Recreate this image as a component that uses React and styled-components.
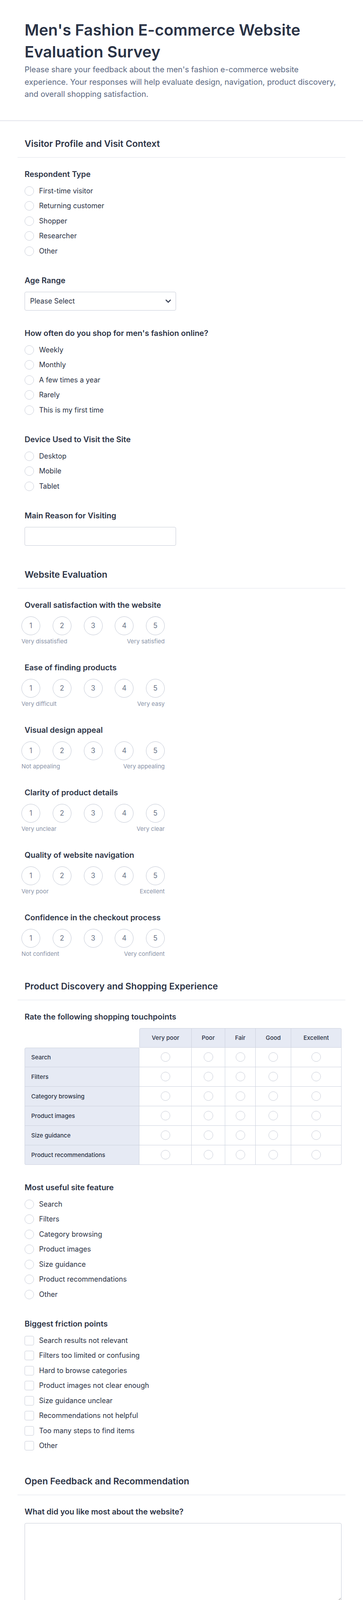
import React from 'react';
import styled, { createGlobalStyle } from 'styled-components';
import { ChevronDown } from 'lucide-react';

const GlobalStyle = createGlobalStyle`
  * { box-sizing: border-box; }
  body {
    margin: 0;
    background: #fff;
    font-family: Inter, "Noto Sans", sans-serif;
    color: #2c3345;
  }
`;

const Header = styled.header`
  padding: 49px 63px 50px;
  border-bottom: 2px solid #e3e5ec;
`;

const Title = styled.h1`
  margin: 0;
  font-size: 40px;
  line-height: 56px;
  font-weight: 600;
  color: #2a3346;
`;

const Intro = styled.p`
  margin: 2px 0 0;
  font-size: 20px;
  line-height: 31.5px;
  color: #5b6881;
`;

const Form = styled.form`
  margin: 0;
  padding: 44px 0 31px;
`;

const Section = styled.section`
  padding: 0 45px;
  & + & {
    margin-top: 60px;
  }
`;

const SectionTitle = styled.h2`
  margin: 0;
  padding: 0 18px 20px;
  font-size: 23px;
  line-height: 28px;
  font-weight: 600;
  border-bottom: 2px solid #eef0f4;
`;

const Questions = styled.div`
  padding: 30px 10px 0;
  display: flex;
  flex-direction: column;
  gap: 46px;
`;

const Question = styled.div`
  padding-left: 8px;
`;

const Label = styled.div`
  font-size: 20px;
  line-height: 24px;
  font-weight: 600;
  margin-bottom: 17px;
`;

const OptionList = styled.div`
  display: flex;
  flex-direction: column;
  gap: 14.5px;
  padding: 2px 0 5px;
`;

const Option = styled.label`
  display: flex;
  align-items: center;
  gap: 13px;
  height: 24px;
  font-size: 18px;
  line-height: 24px;
`;

const Choice = styled.input`
  appearance: none;
  margin: 0;
  width: 24px;
  height: 24px;
  flex-shrink: 0;
  background: #fff;
  border: 1.5px solid #c5cad6;
  border-radius: ${p => (p.type === 'checkbox' ? '4px' : '50%')};
`;

const SelectWrap = styled.div`
  position: relative;
  width: 388px;
  height: 48px;
`;

const Select = styled.select`
  display: block;
  appearance: none;
  width: 100%;
  height: 48px;
  padding: 0 40px 0 13px;
  font-family: inherit;
  font-size: 18px;
  color: #2c3345;
  background: #fff;
  border: 1px solid #c5cad6;
  border-radius: 4px;
`;

const Chevron = styled(ChevronDown)`
  position: absolute;
  right: 9px;
  top: 50%;
  transform: translateY(-50%);
  pointer-events: none;
  color: #3d4559;
`;

const TextInput = styled.input`
  display: block;
  width: 388px;
  height: 48px;
  padding: 0 13px;
  font-family: inherit;
  font-size: 18px;
  border: 1px solid #c5cad6;
  border-radius: 4px;
`;

const TextArea = styled.textarea`
  display: block;
  width: 100%;
  height: 201px;
  padding: 12px 13px;
  font-family: inherit;
  font-size: 18px;
  border: 1px solid #c5cad6;
  border-radius: 4px;
  resize: vertical;
`;

const Scale = styled.div`
  margin-left: -8px;
  width: 367px;
`;

const ScaleRow = styled.div`
  display: flex;
  justify-content: space-between;
`;

const ScaleCircle = styled.span`
  width: 48px;
  height: 48px;
  border-radius: 50%;
  border: 1.5px solid #c0c6d3;
  display: flex;
  align-items: center;
  justify-content: center;
  font-size: 18px;
  line-height: 22px;
  color: #6b7588;
`;

const ScaleHints = styled.div`
  display: flex;
  justify-content: space-between;
  margin-top: 7px;
  font-size: 15px;
  line-height: 18px;
  color: #8a94a8;
`;

const Matrix = styled.table`
  width: 812px;
  border-collapse: separate;
  border-spacing: 0;
  font-size: 15px;
  table-layout: fixed;
  color: #2c3345;
`;

const MatrixRow = styled.tr`
  height: 50px;
`;

const Corner = styled.th`
  width: 294px;
  padding: 0;
  border: none;
  background: transparent;
`;

const HeadCell = styled.th`
  padding: 0;
  font-weight: 500;
  text-align: center;
  background: #e6eaf4;
  border: solid #ccd1de;
  border-width: 1px 1px 1px 0;
  &:nth-child(2) {
    border-left-width: 1px;
    border-top-left-radius: 4px;
  }
  &:last-child {
    border-top-right-radius: 4px;
  }
`;

const RowLabel = styled.th`
  padding: 0 0 0 16px;
  text-align: left;
  font-weight: 500;
  background: #e6eaf4;
  border: solid #ccd1de;
  border-width: 0 1px 1px 1px;
  tr:first-child > & {
    border-top-width: 1px;
    border-top-left-radius: 4px;
  }
  tr:last-child > & {
    border-bottom-left-radius: 4px;
  }
`;

const Cell = styled.td`
  padding: 0;
  text-align: center;
  vertical-align: middle;
  border: solid #ccd1de;
  border-width: 0 1px 1px 0;
  tr:last-child > &:last-child {
    border-bottom-right-radius: 4px;
  }
`;

const CellRadio = styled(Choice)`
  display: block;
  margin: 0 auto;
`;

const Footer = styled.div`
  border-top: 2px solid #eceef3;
  padding: 36px 0 48px 11px;
  display: flex;
  justify-content: center;
`;

const Submit = styled.button`
  width: 223px;
  height: 59px;
  background: #1dbd5d;
  color: #fff;
  border: none;
  border-radius: 4px;
  font-family: inherit;
  font-size: 19px;
  font-weight: 500;
`;

const matrixCols = [
  { name: 'Very poor', width: 134 },
  { name: 'Poor', width: 86 },
  { name: 'Fair', width: 78 },
  { name: 'Good', width: 91 },
  { name: 'Excellent', width: 129 },
];

const sections = [
  {
    title: 'Visitor Profile and Visit Context',
    fields: [
      { type: 'radio', label: 'Respondent Type', options: ['First-time visitor', 'Returning customer', 'Shopper', 'Researcher', 'Other'] },
      { type: 'select', label: 'Age Range' },
      { type: 'radio', label: "How often do you shop for men's fashion online?", options: ['Weekly', 'Monthly', 'A few times a year', 'Rarely', 'This is my first time'] },
      { type: 'radio', label: 'Device Used to Visit the Site', options: ['Desktop', 'Mobile', 'Tablet'] },
      { type: 'text', label: 'Main Reason for Visiting' },
    ],
  },
  {
    title: 'Website Evaluation',
    fields: [
      { type: 'scale', label: 'Overall satisfaction with the website', low: 'Very dissatisfied', high: 'Very satisfied' },
      { type: 'scale', label: 'Ease of finding products', low: 'Very difficult', high: 'Very easy' },
      { type: 'scale', label: 'Visual design appeal', low: 'Not appealing', high: 'Very appealing' },
      { type: 'scale', label: 'Clarity of product details', low: 'Very unclear', high: 'Very clear' },
      { type: 'scale', label: 'Quality of website navigation', low: 'Very poor', high: 'Excellent' },
      { type: 'scale', label: 'Confidence in the checkout process', low: 'Not confident', high: 'Very confident' },
    ],
  },
  {
    title: 'Product Discovery and Shopping Experience',
    fields: [
      { type: 'matrix', label: 'Rate the following shopping touchpoints', rows: ['Search', 'Filters', 'Category browsing', 'Product images', 'Size guidance', 'Product recommendations'] },
      { type: 'radio', label: 'Most useful site feature', options: ['Search', 'Filters', 'Category browsing', 'Product images', 'Size guidance', 'Product recommendations', 'Other'] },
      { type: 'checkbox', label: 'Biggest friction points', options: ['Search results not relevant', 'Filters too limited or confusing', 'Hard to browse categories', 'Product images not clear enough', 'Size guidance unclear', 'Recommendations not helpful', 'Too many steps to find items', 'Other'] },
    ],
  },
  {
    title: 'Open Feedback and Recommendation',
    fields: [
      { type: 'textarea', label: 'What did you like most about the website?' },
      { type: 'textarea', label: 'What could be improved on the website?' },
      { type: 'radio', label: 'Would you recommend this website to others?', options: ['Yes', 'No', 'Maybe'] },
      { type: 'text', label: 'Additional comments' },
    ],
  },
];

const renderInput = (field, key) => {
  switch (field.type) {
    case 'radio':
    case 'checkbox':
      return (
        <OptionList>
          {field.options.map(opt => (
            <Option key={opt}>
              <Choice type={field.type} name={key} />
              {opt}
            </Option>
          ))}
        </OptionList>
      );
    case 'select':
      return (
        <SelectWrap>
          <Select defaultValue="">
            <option value="">Please Select</option>
          </Select>
          <Chevron size={22} strokeWidth={3} />
        </SelectWrap>
      );
    case 'text':
      return <TextInput type="text" />;
    case 'textarea':
      return <TextArea />;
    case 'scale':
      return (
        <Scale>
          <ScaleRow>
            {[1, 2, 3, 4, 5].map(n => (
              <ScaleCircle key={n}>{n}</ScaleCircle>
            ))}
          </ScaleRow>
          <ScaleHints>
            <span>{field.low}</span>
            <span>{field.high}</span>
          </ScaleHints>
        </Scale>
      );
    case 'matrix':
      return (
        <Matrix>
          <thead>
            <MatrixRow>
              <Corner />
              {matrixCols.map(col => (
                <HeadCell key={col.name} style={{ width: col.width }}>{col.name}</HeadCell>
              ))}
            </MatrixRow>
          </thead>
          <tbody>
            {field.rows.map(row => (
              <MatrixRow key={row}>
                <RowLabel>{row}</RowLabel>
                {matrixCols.map(col => (
                  <Cell key={col.name}>
                    <CellRadio type="radio" name={`${key}-${row}`} />
                  </Cell>
                ))}
              </MatrixRow>
            ))}
          </tbody>
        </Matrix>
      );
    default:
      return null;
  }
};

const App = () => {
  return (
    <>
      <GlobalStyle />
      <Header>
        <Title>Men's Fashion E-commerce Website Evaluation Survey</Title>
        <Intro>
          Please share your feedback about the men's fashion e-commerce website experience. Your
          responses will help evaluate design, navigation, product discovery, and overall shopping
          satisfaction.
        </Intro>
      </Header>
      <Form onSubmit={e => e.preventDefault()}>
        {sections.map((section, si) => (
          <Section key={section.title}>
            <SectionTitle>{section.title}</SectionTitle>
            <Questions>
              {section.fields.map((field, fi) => (
                <Question key={field.label}>
                  <Label>{field.label}</Label>
                  {renderInput(field, `q${si}-${fi}`)}
                </Question>
              ))}
            </Questions>
          </Section>
        ))}
      </Form>
      <Footer>
        <Submit type="submit">Submit Survey</Submit>
      </Footer>
    </>
  );
};

export default App;
